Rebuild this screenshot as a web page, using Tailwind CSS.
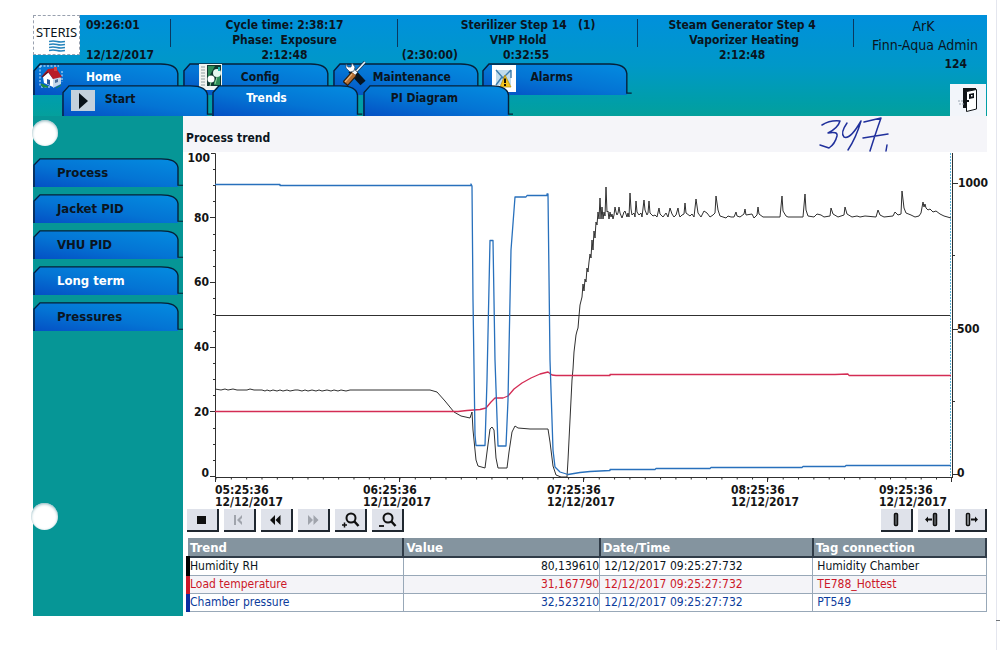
<!DOCTYPE html>
<html lang="en">
<head>
<meta charset="utf-8">
<title>Process trend</title>
<script src="https://cdn.jsdelivr.net/npm/@tailwindcss/browser@4"></script>
</head>
<body class="relative min-h-screen bg-white pt-[15px] pr-[13px] pl-[33px] font-['DejaVu_Sans_Condensed','Noto_Sans',sans-serif] text-xs text-[#0a1420]">

<svg class="absolute size-0" aria-hidden="true">
  <defs>
    <linearGradient id="tabfill" x1="0" y1="1" x2="0.8" y2="0">
      <stop offset="0" stop-color="#0450c4"/><stop offset="0.5" stop-color="#0474d4"/><stop offset="1" stop-color="#0488de"/>
    </linearGradient>
    <symbol id="tab" viewBox="0 0 150 33" preserveAspectRatio="none">
      <path d="M0 33V8L6 1H128Q144 1 145 11V33Z" fill="url(#tabfill)"/>
      <path d="M1 33V8L7 1H128Q144 1 145 11V31H150" fill="none" stroke="#062038" stroke-width="1.4"/>
    </symbol>
  </defs>
</svg>

<header class="flex bg-linear-to-b from-[#0090dc] via-[#0098c8] to-[#04a09c]">
  <div class="min-w-0 flex-1">
    <div class="grid h-12 grid-cols-[47px_91fr_226fr_240fr_215fr] leading-[15px] font-bold">
      <div class="flex h-10 flex-col items-center border border-dashed border-gray-400 bg-white pt-2 font-['Noto_Sans'] text-[13px] leading-4 font-normal">
        <span>STERIS</span>
        <svg class="h-3 w-4" viewBox="0 0 16 12" fill="none" stroke="#2484bc" stroke-width="1.6"><path d="M0 1.500q4-1 8 0t8 0M0 4.500q4-1 8 0t8 0M0 7.500q4-1 8 0t8 0M0 10.500q4-1 8 0t8 0"/></svg>
      </div>
      <div class="relative flex flex-col justify-between pt-[3px] pl-[6px]">
        <span>09:26:01</span><span class="whitespace-nowrap">12/12/2017</span>
        <i class="absolute top-1 right-0 h-7 border-r border-[#0a3860]"></i>
      </div>
      <div class="relative pt-[3px] text-center">
        <p>Cycle time: 2:38:17</p><p class="whitespace-pre">Phase:  Exposure</p><p>2:12:48</p>
        <i class="absolute top-1 right-0 h-7 border-r border-[#0a3860]"></i>
      </div>
      <div class="relative pt-[3px] text-center">
        <p class="pl-5 whitespace-pre">Sterilizer Step 14   (1)</p><p>VHP Hold</p>
        <p class="grid grid-cols-[1fr_1fr_1fr]"><span class="pl-1 text-left">(2:30:00)</span><span class="pl-4">0:32:55</span></p>
        <i class="absolute top-1 right-0 h-7 border-r border-[#0a3860]"></i>
      </div>
      <div class="relative pt-[3px] pr-2 text-center">
        <p>Steam Generator Step 4</p><p class="pl-1">Vaporizer Heating</p><p>2:12:48</p>
        <i class="absolute top-1 right-0 h-7 border-r border-[#0a3860]"></i>
      </div>
    </div>

    <nav aria-label="Main" class="font-bold">
      <div class="flex h-8 w-[73%]">
        <button class="relative flex flex-1 items-start text-left leading-[28px] text-white">
          <svg class="absolute inset-0 h-full w-full"><use href="#tab"/></svg>
          <svg class="relative mt-[2px] ml-[6px] h-6 w-6" viewBox="0 0 24 24">
            <path d="M1 1H20M1 1V22M2 22H12M23 6V17" stroke="#d8f0ff" stroke-dasharray="2 1.500" fill="none"/>
            <path d="M4 12L9 7L14 14V22L5 18Z" fill="#fff"/><path d="M14 14L19 10L22 13V19L14 23Z" fill="#c4d8ec"/>
            <path d="M3 11L9 4L17 3L23 12L14 14L9 7Z" fill="#b81c28"/><path d="M9 7L3 12" stroke="#701018" stroke-width="1.500"/>
            <path d="M15 2h3v4h-3z" fill="#d84040"/><path d="M8 14l3 1v5l-3-1z" fill="#2858a0"/><path d="M16 15l3-1v3l-3 1z" fill="#486c9c"/>
            <path d="M2 19l3 1 4 2h-5zM17 23l5-3" stroke="#208c40" fill="#208c40"/>
          </svg>
          <span class="relative ml-[23px]">Home</span>
        </button>
        <button class="relative flex flex-1 items-start text-left leading-[28px]">
          <svg class="absolute inset-0 h-full w-full"><use href="#tab"/></svg>
          <svg class="relative mt-[1px] ml-[16px] h-[26px] w-[23px]" viewBox="0 0 23 26">
            <path d="M0 0h23v26H0z" fill="#f0f4f0"/><path d="M8 1h14v21H8z" fill="#103830"/><path d="M9 2h7l-5 9-2 8zM15 18l6-8v11h-6z" fill="#2c8c58"/>
            <path d="M2 3h4M2 6h4M2 9h4M2 12h4M2 15h4M2 18h4M2 21h4" stroke="#90a0a0" stroke-width="1.200"/>
            <circle cx="12" cy="15" r="3.500" fill="#fff"/><circle cx="18" cy="9" r="4" fill="#e4f8f0"/><path d="M12 18l-1 4M18 13l-2 7" stroke="#94d4a0"/><path d="M19 3h2v4h-2z" fill="#20b4a8"/>
          </svg>
          <span class="relative ml-[19px]">Config</span>
        </button>
        <button class="relative flex flex-1 items-start text-left leading-[28px]">
          <svg class="absolute inset-0 h-full w-full"><use href="#tab"/></svg>
          <svg class="relative -mt-[2px] ml-[10px] h-[27px] w-[26px]" viewBox="0 0 26 27">
            <path d="M22 1L8 16" stroke="#10304c" stroke-width="3"/><path d="M22 1L9 15" stroke="#e4f0f8" stroke-width="1.800"/>
            <path d="M8 9L20 22" stroke="#081420" stroke-width="7"/><path d="M8 8L13 13" stroke="#f4f8fc" stroke-width="4"/>
            <path d="M3 3v4l4 4 4-1 1-4-3-4-1 4-3 0z" fill="#fff" stroke="#304860" stroke-width=".7"/>
            <path d="M2 23L11 13" stroke="#302010" stroke-width="7"/><path d="M3 22L11 13" stroke="#b87034" stroke-width="4.500"/><path d="M2 21L9 13" stroke="#e8b47c" stroke-width="1.200"/>
          </svg>
          <span class="relative ml-[4px]">Maintenance</span>
        </button>
        <button class="relative flex flex-1 items-start text-left leading-[28px]">
          <svg class="absolute inset-0 h-full w-full"><use href="#tab"/></svg>
          <svg class="relative mt-[2px] ml-[10px] h-[27px] w-6" viewBox="0 0 24 27">
            <path d="M0 0h24v27H0z" fill="#fff"/><path d="M4 5h15v15H4z" fill="#c0dcec"/><path d="M4 5l7 8 8-8M4 20l6-8M19 5v8" fill="none" stroke="#3c7cac" stroke-width="1.400"/>
            <path d="M13 10l6 12H8z" fill="#f4c41c" stroke="#b08c10" stroke-width=".7"/><path d="M13 13.500v4.500M13 19v2" stroke="#181000" stroke-width="2"/>
          </svg>
          <span class="relative ml-[14px]">Alarms</span>
        </button>
      </div>
      <div class="relative -mt-[10px] ml-[3.5%] flex h-[31px] w-[55%]">
        <button class="relative flex flex-1 items-start text-left leading-[29px]">
          <svg class="absolute inset-0 h-full w-full"><use href="#tab"/></svg>
          <svg class="relative mt-[5px] ml-[9px] h-[21px] w-6" viewBox="0 0 24 21"><path d="M0 0h24v21H0z" fill="#c4d0dc"/><path d="M8 3l9 8-9 8z" fill="#081018"/></svg>
          <span class="relative ml-[10px]">Start</span>
        </button>
        <button class="relative flex flex-1 items-start text-left leading-[26px] text-white" aria-current="page">
          <svg class="absolute inset-0 h-full w-full"><use href="#tab"/></svg>
          <span class="relative ml-[34px]">Trends</span>
        </button>
        <button class="relative flex flex-1 items-start text-left leading-[26px]">
          <svg class="absolute inset-0 h-full w-full"><use href="#tab"/></svg>
          <span class="relative ml-[28px]">PI Diagram</span>
        </button>
      </div>
    </nav>
  </div>
  <div class="flex w-[133px] flex-col pt-[2px] text-center text-sm leading-[19px]">
    <p class="pl-[6px]">ArK</p>
    <p class="pl-[9px] whitespace-nowrap">Finn-Aqua Admin</p>
    <p class="pr-[20px] text-right text-xs leading-[19px] font-bold">124</p>
    <button class="mt-auto mr-[1px] flex h-8 w-9 justify-center self-end bg-[#f2f5fa] pt-1" aria-label="Exit">
      <svg class="h-6 w-5" viewBox="0 0 20 24"><path d="M5 0h13v4H9v16H5z" fill="#101418"/><path d="M8.500 3.500L18.500 1.500V21L8.500 23.500Z" fill="#fff" stroke="#101418"/><path d="M11 6l5-1v5l-5 1z" fill="#101418"/><path d="M13 7h1.500v1.500H13z" fill="#fff"/><path d="M0 13h5M1 16h5" stroke="#98a4b0" stroke-dasharray="2 1"/><path d="M8 13h3" stroke="#101418" stroke-width="2"/></svg>
    </button>
  </div>
</header>

<div class="flex">
  <aside class="relative w-[150px] shrink-0 bg-[#069696] pt-[42px] text-[13px] font-bold">
    <i class="absolute top-1 -left-px size-[26px] rounded-full bg-white shadow-[inset_0_1px_3px_#8cb4bc]"></i>
    <i class="absolute top-[387px] -left-[2px] size-[27px] rounded-full bg-white shadow-[inset_0_1px_3px_#8cb4bc]"></i>
    <nav aria-label="Trends" class="flex flex-col gap-[7px]">
      <button class="relative h-[29px] w-full pl-6 text-left leading-[26px]"><svg class="absolute inset-0 h-full w-full"><use href="#tab"/></svg><span class="relative">Process</span></button>
      <button class="relative h-[29px] w-full pl-6 text-left leading-[26px]"><svg class="absolute inset-0 h-full w-full"><use href="#tab"/></svg><span class="relative">Jacket PID</span></button>
      <button class="relative h-[29px] w-full pl-6 text-left leading-[26px]"><svg class="absolute inset-0 h-full w-full"><use href="#tab"/></svg><span class="relative">VHU PID</span></button>
      <button class="relative h-[29px] w-full pl-6 text-left leading-[26px] text-white" aria-current="page"><svg class="absolute inset-0 h-full w-full"><use href="#tab"/></svg><span class="relative">Long term</span></button>
      <button class="relative h-[29px] w-full pl-6 text-left leading-[26px]"><svg class="absolute inset-0 h-full w-full"><use href="#tab"/></svg><span class="relative">Pressures</span></button>
    </nav>
  </aside>

  <main class="min-w-0 flex-1">
    <div class="relative flex h-9 items-center bg-[#f5f5f9] pt-[8px] pl-[3px]">
      <h1 class="font-bold">Process trend</h1>
      <svg class="absolute top-0 right-[91px] h-10 w-20" viewBox="816 116 80 40" fill="none" stroke="#20309c" stroke-width="1.500" stroke-linecap="round" stroke-linejoin="round" role="img" aria-label="347">
        <path d="M822 125Q830 120 840 121Q838 128 828 133Q838 131 837 136Q835 144 829 148L820 145M847 123Q840 133 844 137Q850 140 861 121Q856 138 848 150M864 122L881 118Q876 132 870 151M863 138L888 134M887 145L886 151"/>
      </svg>
    </div>
    <svg class="block w-full overflow-visible" viewBox="183 152 804 357" font-weight="bold" font-size="12" fill="#141414" role="img" aria-label="Process trend chart">
      <g stroke="#303030" fill="none" stroke-width="1">
        <path d="M211 153.500H215.500V477.500H951.500"/>
        <path d="M210 217.500h5M210 282.500h5M210 347.500h5M210 411.500h5M210 476.500h5"/>
        <path d="M213 169.500h2M213 185.500h2M213 201.500h2M213 234.500h2M213 250.500h2M213 266.500h2M213 298.500h2M213 314.500h2M213 331.500h2M213 363.500h2M213 379.500h2M213 395.500h2M213 428.500h2M213 444.500h2M213 460.500h2"/>
        <path d="M215.500 477v5M399.500 477v5M583.500 477v5M767.500 477v5M951.500 477v5"/>
        <path d="M215.500 478.500H951" stroke-width="2" stroke-dasharray="1 14.330"/>
        <path d="M952.500 153V478"/><path d="M953 183.500h5M953 329.500h5M953 474.500h5M953 255.500h2M953 401.500h2"/>
        <path d="M215 315.500H951"/>
      </g>
      <path d="M950.500 153V477" stroke="#5cb4d8" stroke-dasharray="2 1" fill="none"/>
      <g text-anchor="end">
        <text x="210" y="162">100</text><text x="209" y="222">80</text><text x="209" y="286">60</text><text x="209" y="351">40</text><text x="209" y="416">20</text><text x="209" y="477">0</text>
      </g>
      <text x="958" y="187">1000</text><text x="957" y="333">500</text><text x="957" y="477">0</text>
      <g>
        <text x="215" y="494">05:25:36</text><text x="215" y="506">12/12/2017</text>
        <text x="363" y="494">06:25:36</text><text x="363" y="506">12/12/2017</text>
        <text x="547" y="494">07:25:36</text><text x="547" y="506">12/12/2017</text>
        <text x="731" y="494">08:25:36</text><text x="731" y="506">12/12/2017</text>
        <text x="879" y="494">09:25:36</text><text x="879" y="506">12/12/2017</text>
      </g>
      <g fill="none" stroke-width="1" stroke-linejoin="round">
        <path stroke="#303030" d="M215 389l6 1 4-1 3 1 5-1 4 1h10l3-1 4 1h8l3 1 2-1 3 1 3-1 4 1 3-1 3 1 4-1 3 1 5-1 3 0 4 1 3-1 3 1 4-1 4 1 3-1 3 1 5-1 4 1 3-1 4 1 3-1 5 1 4-1H430L437 392 445 401 454 412 461 416 470 418 472 412 473 430 476 460 478 466 485 468 487 452 490 429 492 427 494 430 496 458 498 468H507L509 452 512 432 515 426 518 428 530 429H548L550 442 553 466 556 475 561 477H567L568 460 570 420 571 400 572 380 573 369 574 352 576 335 577 331 578 328 579 316 580 305 582 297 583 284 584 291 585 279 586 282 587 268 588 272 589 262 590 254 591 258 592 240 593 250 594 231 595 238 596 222 597 225 598 212 599 219 600 198 601 219 602 207 603 219 604 212 605 216 606 187 607 212 608 211 609 219 610 212 611 217 612 214 613 219 614 215 615 207 616 212 617 215 618 213 619 207 620 213 622 218 624 212 625 211 627 217 628 213 629 217 630 193 631 209 632 215 634 213 635 217 636 201 637 212 639 215 641 213 642 217 644 200 645 210 647 215 648 213 649 201 650 213 653 216 655 215 657 217 659 208 660 214 663 217 666 213 668 217 670 208 672 214 674 217 676 215 678 208 679 214 680 217 682 215 684 214 685 203 686 213 690 216 692 214 694 217 696 199 698 213 701 217 704 211 707 213 710 217 713 215 715 213 716 196 718 210 720 216 726 218 728 216 731 217 734 217 736 212 737 216 740 217 744 214 745 209 746 215 752 214 754 218 757 215 758 207 759 214 763 217 772 217 780 217 782 196 783 211 786 216 788 217 803 217 805 194 806 210 808 216 814 217 817 214 821 215 824 217 830 216 831 208 833 214 838 217 844 215 845 207 847 214 852 217 857 216 860 217 865 216 876 217 878 210 880 215 884 217 893 216 895 212 898 215 901 214 902 191 904 208 906 213 911 215 915 217 919 216 921 213 923 202 924 207 925 204 926 208 928 210 930 209 933 212 936 211 940 214 944 216 951 218"/>
        <path stroke="#d42c54" stroke-width="1.300" d="M215 411.500H458L467 410.500 480 409.500 486 408 491 402 495 398 503 398 508 396 514 389 522 383 531 378 540 374 548 372 552 375 556 375.500 610 375.500V374.500H835L848 374 849 375.500H951"/>
        <path stroke="#2870bc" stroke-width="1.300" d="M215 184.500H280V185.500H471V184L472 186 473 300 475 435 476 445.500H485L487 380 490 240.500H493L495 360 498 446H506L508 400 511 250 515 197H526L527 195.500H547V194L548 194 550 360 553 450 555 467 560 472 568 474.500 580 472.500 590 471.500 610 470.500V469.500L655 469.500 656 468.500 710 468.500 711 467.500 802 467.500 803 466.500 845 466.500 846 465.500H951"/>
      </g>
    </svg>

    <div class="flex h-[23px] gap-[5px] pl-1 *:flex *:h-[23px] *:w-8 *:items-center *:justify-center *:border-r-2 *:border-b-2 *:border-[#202830] *:bg-[#dfe2ea]">
      <button aria-label="Stop"><svg class="size-6" viewBox="0 0 24 24"><path d="M7 8h9v8H7z" fill="#101010"/></svg></button>
      <button aria-label="First" disabled><svg class="size-6" viewBox="0 0 24 24"><path d="M7 7h2v10H7zM10 12l5-5v3l-2 2 2 2v3z" fill="#a0a4ac"/></svg></button>
      <button aria-label="Back"><svg class="size-6" viewBox="0 0 24 24"><path d="M6 12l5-5v10zM11.500 12l5-5v10z" fill="#101010"/></svg></button>
      <button aria-label="Forward" disabled><svg class="size-6" viewBox="0 0 24 24"><path d="M12 12L7 7v10zM17.500 12l-5-5v10z" fill="#a0a4ac"/></svg></button>
      <button aria-label="Zoom in"><svg class="size-6" viewBox="0 0 24 24" fill="none" stroke="#101010"><circle cx="13" cy="10" r="4.500" stroke-width="2"/><path d="M16 13l4.500 5" stroke-width="2.500"/><path d="M4 17h5M6.500 14.500v5" stroke-width="1.500"/></svg></button>
      <button aria-label="Zoom out"><svg class="size-6" viewBox="0 0 24 24" fill="none" stroke="#101010"><circle cx="13" cy="10" r="4.500" stroke-width="2"/><path d="M16 13l4.500 5" stroke-width="2.500"/><path d="M4 18h5" stroke-width="1.800"/></svg></button>
      <button class="ml-auto" aria-label="Ruler"><svg class="size-6" viewBox="0 0 24 24"><rect x="10.500" y="5.500" width="3" height="12" rx="1" fill="#606468" stroke="#101010" stroke-width="1.500"/></svg></button>
      <button aria-label="Ruler left"><svg class="size-6" viewBox="0 0 24 24"><rect x="12.500" y="5.500" width="3" height="12" rx="1" fill="#606468" stroke="#101010" stroke-width="1.500"/><path d="M4 11.500l3-3v2h4v2H7v2z" fill="#101010"/></svg></button>
      <button aria-label="Ruler right"><svg class="size-6" viewBox="0 0 24 24"><rect x="8.500" y="5.500" width="3" height="12" rx="1" fill="#a0a4a8" stroke="#101010" stroke-width="1.500"/><path d="M20 11.500l-3-3v2h-4v2h4v2z" fill="#101010"/></svg></button>
    </div>

    <table class="mt-[6px] mb-1 ml-[3px] w-[calc(100%-3px)] table-fixed border-collapse text-xs leading-[17px]">
      <colgroup><col class="w-[27%]"><col class="w-[24.600%]"><col class="w-[26.700%]"><col></colgroup>
      <thead>
        <tr class="h-[19px] bg-[#84949f] text-left text-[13px] text-white *:border-r-2 *:border-b-2 *:border-[#303c48] *:p-0 *:pl-[2px]"><th>Trend</th><th>Value</th><th>Date/Time</th><th>Tag connection</th></tr>
      </thead>
      <tbody class="*:h-[18px] *:*:border-r *:*:border-b *:*:border-[#98a8b8] *:*:p-0">
        <tr><td class="border-l-4 border-l-black! pl-px">Humidity RH</td><td class="text-right">80,139610</td><td><span class="pl-1">12/12/2017 09:25:27:732</span></td><td><span class="pl-1">Humidity Chamber</span></td></tr>
        <tr class="bg-[#f4f4f8] text-[#cc1828]"><td class="border-l-4 border-l-[#cc1828]! pl-px">Load temperature</td><td class="text-right">31,167790</td><td><span class="pl-1">12/12/2017 09:25:27:732</span></td><td><span class="pl-1">TE788_Hottest</span></td></tr>
        <tr class="text-[#0c3c9c]"><td class="border-l-4 border-l-[#0c2ca0]! pl-px">Chamber pressure</td><td class="text-right">32,523210</td><td><span class="pl-1">12/12/2017 09:25:27:732</span></td><td><span class="pl-1">PT549</span></td></tr>
      </tbody>
    </table>
  </main>
</div>
<i class="absolute inset-y-0 right-[3px] border-r border-[#e4e6ee]"></i>
<i class="absolute right-0 bottom-[29px] w-1 border-b border-[#707478]"></i>
</body>
</html>
